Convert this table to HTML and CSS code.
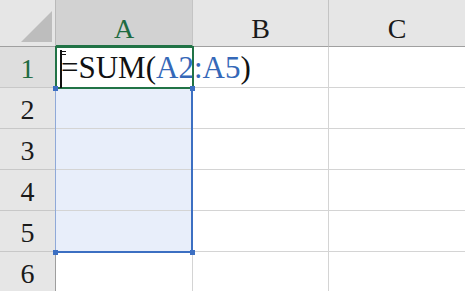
FILE: index.html
```html
<!DOCTYPE html>
<html>
<head>
<meta charset="utf-8">
<link rel="stylesheet" href="styles.css">
</head>
<body>
<div class="sheet">
  <div class="hdr corner"><span class="tri"></span></div>
  <div class="hdr col active-col">A</div>
  <div class="hdr col">B</div>
  <div class="hdr col last">C</div>

  <div class="hdr row active-row">1</div>
  <div class="cell editing">
    <span class="formula">=SUM(<span class="ref">A2:A5</span>)</span>
    <svg class="ibeam" width="10" height="40" viewBox="0 0 10 40">
      <rect x="1" y="1" width="2" height="38" fill="#111"/>
      <rect x="3" y="2" width="4" height="1" fill="#111"/>
      <rect x="3" y="5" width="4" height="1" fill="#111"/>
    </svg>
  </div>
  <div class="cell"></div>
  <div class="cell last"></div>

  <div class="hdr row">2</div>
  <div class="cell sel">
    <div class="range">
      <span class="h tl"></span><span class="h tr"></span>
      <span class="h bl"></span><span class="h br"></span>
    </div>
  </div>
  <div class="cell"></div>
  <div class="cell last"></div>

  <div class="hdr row">3</div>
  <div class="cell sel"></div>
  <div class="cell"></div>
  <div class="cell last"></div>

  <div class="hdr row">4</div>
  <div class="cell sel"></div>
  <div class="cell"></div>
  <div class="cell last"></div>

  <div class="hdr row">5</div>
  <div class="cell sel"></div>
  <div class="cell"></div>
  <div class="cell last"></div>

  <div class="hdr row">6</div>
  <div class="cell"></div>
  <div class="cell"></div>
  <div class="cell last"></div>
</div>
</body>
</html>
```

FILE: styles.css
```css
html, body {
  margin: 0;
  padding: 0;
  background: #ffffff;
  overflow: hidden;
}
.sheet {
  display: grid;
  grid-template-columns: 56px 137px 136px 136px;
  grid-template-rows: 47px repeat(6, 41px);
  width: 465px;
  height: 291px;
  overflow: hidden;
  font-family: "Liberation Serif", "Times New Roman", serif;
}
.hdr {
  box-sizing: border-box;
  background: #e6e6e6;
  display: flex;
  align-items: center;
  justify-content: center;
  color: #1a1a1a;
  font-size: 28px;
  position: relative;
}
.corner {
  border-right: 1px solid #b9b9b9;
  border-bottom: 1px solid #a0a0a0;
  background: #e6e6e6;
}
.tri {
  position: absolute;
  right: 3px;
  bottom: 4px;
  width: 0;
  height: 0;
  border-left: 31px solid transparent;
  border-bottom: 31px solid #bdbdbd;
}
.col {
  border-right: 1px solid #c4c4c4;
  border-bottom: 1px solid #a0a0a0;
  padding-top: 12px;
}
.col.last { border-right: none; }
.active-col {
  background: #d2d2d2;
  color: #1e6b41;
  border-bottom: 2px solid #217346;
}
.row {
  border-right: 1px solid #9e9e9e;
  border-bottom: 1px solid #c8c8c8;
  padding-top: 4px;
}
.active-row {
  background: #dedede;
  color: #1e6b41;
}
.cell {
  box-sizing: border-box;
  border-right: 1px solid #d4d4d4;
  border-bottom: 1px solid #d4d4d4;
  position: relative;
}
.cell.last { border-right: none; }
.cell.sel { background: #e8eefa; }
.editing {
  display: flex;
  align-items: center;
  padding-left: 5px;
  padding-top: 2px;
  outline: 2px solid #217346;
  outline-offset: -1px;
  z-index: 2;
  font-size: 31px;
  color: #111;
  white-space: nowrap;
  overflow: visible;
}
.ref { color: #3568b8; }
.ibeam {
  position: absolute;
  left: 3px;
  top: 2px;
}
.range {
  position: absolute;
  left: -1px;
  top: -1px;
  width: 138px;
  height: 166px;
  box-sizing: border-box;
  border: 2px solid #3c6fc2;
  border-left-width: 1px;
  border-left-color: #8fa9d8;
  border-top-color: transparent;
  z-index: 3;
  pointer-events: none;
}
.h {
  position: absolute;
  width: 5px;
  height: 5px;
  background: #3c6fc2;
}
.tl { left: -3px; top: -3px; }
.tr { right: -4px; top: -3px; }
.bl { left: -3px; bottom: -4px; }
.br { right: -4px; bottom: -4px; }
```
